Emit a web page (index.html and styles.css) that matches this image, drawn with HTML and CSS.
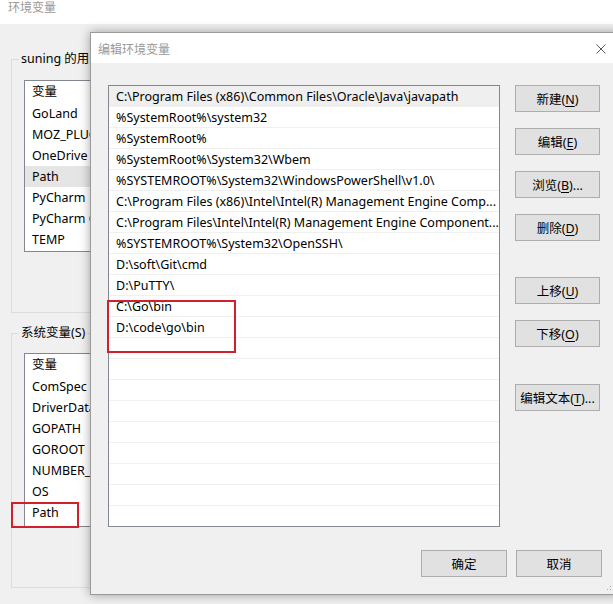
FILE: index.html
```html
<!DOCTYPE html>
<html lang="zh-CN">
<head>
  <meta charset="UTF-8" />
  <title>编辑环境变量</title>
  <link rel="stylesheet" href="styles.css">
</head>
<body>
  <div class="env_window">
    <div class="env_title">环境变量</div>

    <fieldset class="group user_group">
      <legend>suning 的用户变量(U)</legend>
      <div class="var_list">
        <div class="var_head">变量</div>
        <div class="var_row">GoLand</div>
        <div class="var_row">MOZ_PLUGIN_PATH</div>
        <div class="var_row">OneDrive</div>
        <div class="var_row selected">Path</div>
        <div class="var_row">PyCharm</div>
        <div class="var_row">PyCharm Community Edition</div>
        <div class="var_row">TEMP</div>
      </div>
    </fieldset>

    <fieldset class="group sys_group">
      <legend>系统变量(S)</legend>
      <div class="var_list sys_list">
        <div class="var_head">变量</div>
        <div class="var_row">ComSpec</div>
        <div class="var_row">DriverData</div>
        <div class="var_row">GOPATH</div>
        <div class="var_row">GOROOT</div>
        <div class="var_row">NUMBER_OF_PROCESSORS</div>
        <div class="var_row">OS</div>
        <div class="var_row">Path</div>
      </div>
    </fieldset>
  </div>

  <div class="edit_dialog">
    <div class="dialog_title">
      <span>编辑环境变量</span>
      <svg class="close_icon" width="10" height="10" viewBox="0 0 10 10">
        <path d="M0.5 0.5 L9.5 9.5 M9.5 0.5 L0.5 9.5" stroke="#555" stroke-width="1" fill="none"/>
      </svg>
    </div>

    <div class="dialog_body">
      <div class="path_list">
        <div class="path_row focused">C:\Program Files (x86)\Common Files\Oracle\Java\javapath</div>
        <div class="path_row">%SystemRoot%\system32</div>
        <div class="path_row">%SystemRoot%</div>
        <div class="path_row">%SystemRoot%\System32\Wbem</div>
        <div class="path_row">%SYSTEMROOT%\System32\WindowsPowerShell\v1.0\</div>
        <div class="path_row">C:\Program Files (x86)\Intel\Intel(R) Management Engine Comp...</div>
        <div class="path_row">C:\Program Files\Intel\Intel(R) Management Engine Component...</div>
        <div class="path_row">%SYSTEMROOT%\System32\OpenSSH\</div>
        <div class="path_row">D:\soft\Git\cmd</div>
        <div class="path_row">D:\PuTTY\</div>
        <div class="path_row">C:\Go\bin</div>
        <div class="path_row">D:\code\go\bin</div>
        <div class="path_row"></div>
        <div class="path_row"></div>
        <div class="path_row"></div>
        <div class="path_row"></div>
        <div class="path_row"></div>
        <div class="path_row"></div>
        <div class="path_row"></div>
        <div class="path_row"></div>
        <div class="path_row"></div>
      </div>

      <div class="side_buttons">
        <button class="win_button">新建(<u>N</u>)</button>
        <button class="win_button">编辑(<u>E</u>)</button>
        <button class="win_button">浏览(<u>B</u>)...</button>
        <button class="win_button">删除(<u>D</u>)</button>
        <button class="win_button far">上移(<u>U</u>)</button>
        <button class="win_button">下移(<u>O</u>)</button>
        <button class="win_button farther">编辑文本(<u>T</u>)...</button>
      </div>
    </div>

    <div class="dialog_footer">
      <button class="win_button">确定</button>
      <button class="win_button">取消</button>
    </div>

    <svg class="grip" width="9" height="9" viewBox="0 0 9 9">
      <rect x="7" y="1" width="1" height="1" fill="#aaa"/>
      <rect x="4" y="4" width="1" height="1" fill="#aaa"/>
      <rect x="7" y="4" width="1" height="1" fill="#aaa"/>
      <rect x="1" y="7" width="1" height="1" fill="#aaa"/>
      <rect x="4" y="7" width="1" height="1" fill="#aaa"/>
      <rect x="7" y="7" width="1" height="1" fill="#aaa"/>
    </svg>
  </div>

  <!-- red highlight boxes -->
  <div class="mark mark_path"></div>
  <div class="mark mark_go"></div>
</body>
</html>
```

FILE: styles.css
```css
* {
  box-sizing: border-box;
}

body {
  margin: 0;
  width: 613px;
  height: 604px;
  overflow: hidden;
  position: relative;
  background-color: #f0f0f0;
  font-family: "Noto Sans", "Noto Sans CJK SC", sans-serif;
  font-size: 12.5px;
  color: #000;
}

/* background window */

.env_title {
  height: 24px;
  padding: 0 0 0 8px;
  line-height: 16px;
  font-size: 12px;
  background-color: #fff;
  color: #999;
}

.group {
  width: 600px;
  margin: 0 0 0 11px;
  padding: 13px 0 60px 7px;
  border: 1px solid #dcdcdc;
}

.group legend {
  padding: 0 2px;
  line-height: 16px;
  white-space: nowrap;
}

.user_group {
  margin-top: 27px;
}

.sys_group {
  margin-top: 12px;
  padding-top: 12px;
}

.var_list {
  margin-left: 5px;
  width: 520px;
  padding-bottom: 1px;
  background-color: #fff;
  border: 1px solid #828790;
}

.sys_list {
  padding-bottom: 3px;
}

.var_head {
  height: 22px;
  line-height: 22px;
  padding-left: 7px;
}

.var_row {
  height: 21px;
  line-height: 21px;
  padding-left: 7px;
  white-space: nowrap;
}

.var_row.selected {
  background-color: #e5e5e5;
}

/* edit dialog */

.edit_dialog {
  position: absolute;
  left: 90px;
  top: 32px;
  width: 529px;
  height: 563px;
  background-color: #f0f0f0;
  border: 1px solid #9a9a9a;
  box-shadow: 0 0 10px rgba(0, 0, 0, 0.35);
}

.dialog_title {
  height: 30px;
  display: flex;
  align-items: center;
  justify-content: space-between;
  padding: 1px 12px 0 7px;
  font-size: 12px;
  background-color: #fff;
  color: #999;
}

.close_icon {
  display: block;
}

.dialog_body {
  display: flex;
  gap: 15px;
  padding: 22px 0 0 17px;
}

.path_list {
  width: 392px;
  height: 442px;
  overflow: hidden;
  background-color: #fff;
  border: 1px solid #828790;
}

.path_row {
  height: 21px;
  padding: 2px 0 0 7px;
  line-height: 18px;
  border-bottom: 1px solid #f0f0f0;
  white-space: nowrap;
  overflow: hidden;
}

.path_row.focused {
  background-color: #efefef;
}

.side_buttons {
  display: flex;
  flex-direction: column;
  gap: 16px;
}

.win_button {
  width: 85px;
  height: 27px;
  padding: 0;
  font: inherit;
  color: #000;
  background-color: #e1e1e1;
  border: 1px solid #adadad;
}

.win_button u {
  text-decoration-thickness: 1px;
  text-underline-offset: 2px;
}

.side_buttons .far {
  margin-top: 20px;
}

.side_buttons .farther {
  margin-top: 21px;
}

.dialog_footer {
  display: flex;
  justify-content: flex-end;
  gap: 9px;
  padding: 23px 16px 0 0;
}

.dialog_footer .win_button {
  width: 86px;
}

.grip {
  position: absolute;
  right: 3px;
  bottom: 3px;
}

/* highlight frames */

.mark {
  position: absolute;
  border: 2px solid #d0202d;
}

.mark_path {
  left: 11px;
  top: 502px;
  width: 68px;
  height: 26px;
}

.mark_go {
  left: 107px;
  top: 300px;
  width: 129px;
  height: 53px;
}
```
